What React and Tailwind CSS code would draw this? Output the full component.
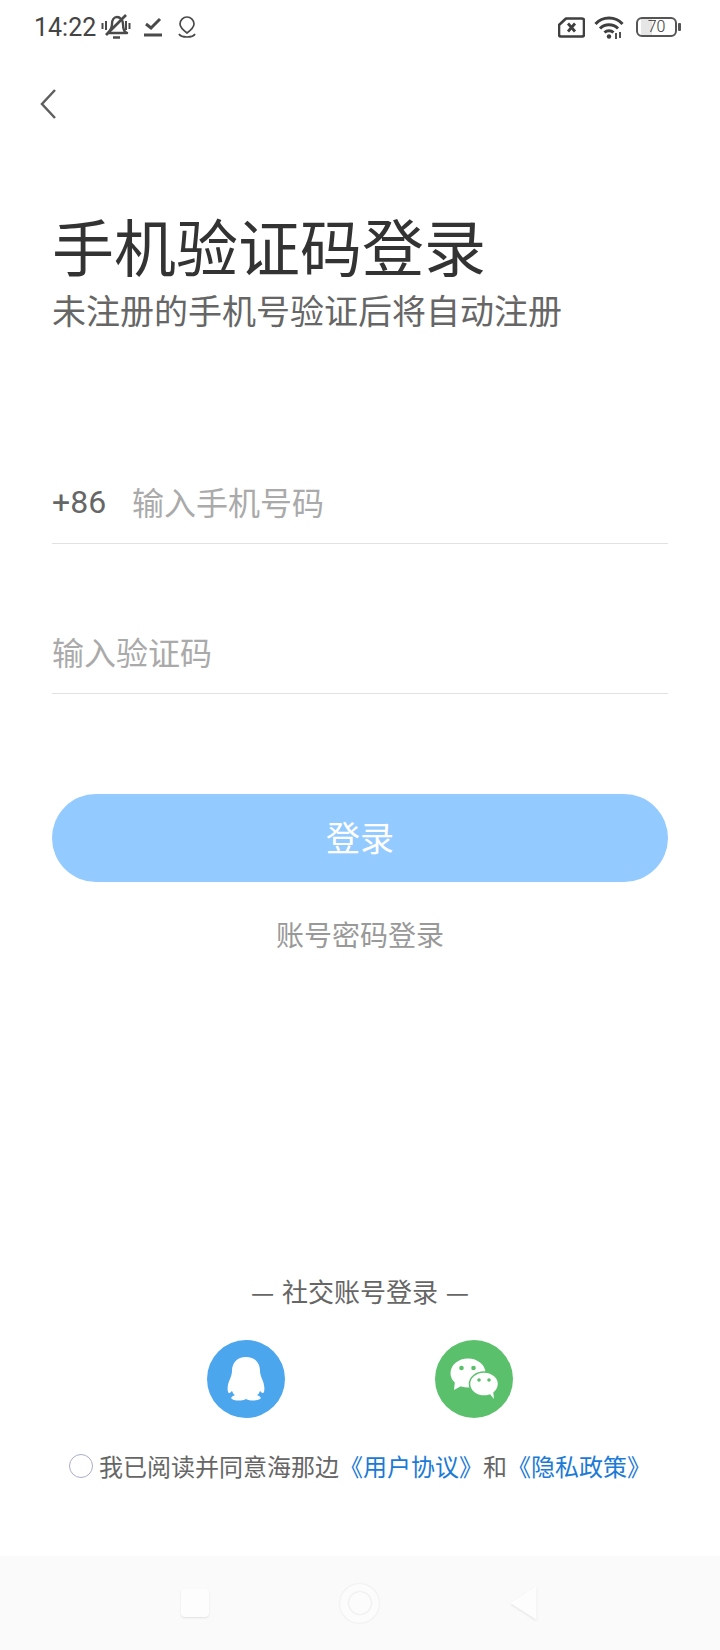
import React from 'react';

const cjk = { fontFamily: '"Noto Sans CJK SC", "Noto Sans", sans-serif' };

const StatusBar = () => (
  <div className="flex items-center justify-between h-[54px] pl-[34px] pr-[39px]">
    <div className="flex items-center">
      <span className="text-[25px] leading-none font-['Roboto'] text-[#444]">14:22</span>
      <svg width="30" height="26" viewBox="0 0 30 26" className="ml-[5px]" fill="none" stroke="#4a4a4a" strokeWidth="2.400">
        <path d="M7 19c2-2 4-5 4-9 0-4 2-7 5-7s6 3 6 7c0 4 1 8 4 9z" strokeLinejoin="round" />
        <path d="M12 23.500h7" strokeWidth="2.500" />
        <path d="M5 21 25 1" strokeWidth="2.600" />
        <path d="M1.500 9v6M5 7v9M25 7v9M28.500 9v6" strokeWidth="2" />
      </svg>
      <svg width="18" height="20" viewBox="0 0 18 20" className="ml-[13px]" fill="none" stroke="#4a4a4a">
        <path d="M2 7l5 4 9-9" strokeWidth="3" />
        <path d="M0 18h18" strokeWidth="3" />
      </svg>
      <svg width="18" height="23" viewBox="0 0 18 23" className="ml-[16px]" fill="none" stroke="#4a4a4a" strokeWidth="1.700">
        <path d="M9 17C5 14 2 11 2 8a7 7 0 0 1 14 0c0 3-3 6-7 9z" strokeLinejoin="round" />
        <path d="M1 18c2 4 14 4 16 0" />
      </svg>
    </div>
    <div className="flex items-center">
      <svg width="27" height="21" viewBox="0 0 27 21" fill="none" stroke="#3f3f3f">
        <path d="M8 1.500h16a2 2 0 0 1 2 2v14a2 2 0 0 1-2 2H3a2 2 0 0 1-2-2V8z" strokeWidth="2.600" strokeLinejoin="round" />
        <path d="M10 6.500l7 8M17 6.500l-7 8" strokeWidth="2.800" />
      </svg>
      <svg width="30" height="24" viewBox="0 0 30 24" className="ml-[9px]" fill="none" stroke="#3f3f3f" strokeWidth="3">
        <path d="M1.500 9c7-8 20-8 27 0" />
        <path d="M6 13.500c5-5 13-5 18 0" />
        <path d="M10.500 17.500c2.500-2.500 6.500-2.500 9 0" />
        <circle cx="15" cy="21.500" r="2.200" fill="#3f3f3f" stroke="none" />
        <path d="M22 18v6M26 17v6" strokeWidth="1.800" />
      </svg>
      <div className="ml-[12px] w-[41px] h-[20px] rounded-[6px] border-2 border-[#555] flex items-center justify-center text-[16px] leading-none font-['Roboto'] font-light text-[#333] bg-[linear-gradient(90deg,#fff_0%,#fff_8%,#e6e6e6_8%,#e6e6e6_38%,#fff_38%)]">
        70
      </div>
      <div className="ml-[1px] w-[3px] h-[8px] rounded-[1px] bg-[#555]" />
    </div>
  </div>
);

const Body = () => (
  <div className="h-[1502px] flex flex-col justify-between bg-white" style={cjk}>
    <div>
      <div className="pl-[40px] pt-[34px]">
        <svg width="18" height="32" viewBox="0 0 18 32" fill="none" stroke="#5f5f5f" strokeWidth="2.500" className="block">
          <path d="M15 2 2 16l13 14" />
        </svg>
      </div>
      <div className="px-[52px]">
        <h1 className="mt-[88px] text-[62px] leading-[74px] text-[#333] font-normal">手机验证码登录</h1>
        <p className="text-[34px] leading-[42px] text-[#666] mt-[7px]">未注册的手机号验证后将自动注册</p>
        <div className="mt-[127px] flex items-center h-[86px] border-b border-[#e2e2e2]">
          <span className="mt-[2px] text-[32px] font-['Roboto'] text-[#666] w-[80px]">+86</span>
          <span className="text-[32px] text-[#aaa]">输入手机号码</span>
        </div>
        <div className="mt-[64px] flex items-center h-[86px] border-b border-[#e2e2e2]">
          <span className="text-[32px] text-[#aaa]">输入验证码</span>
        </div>
        <button className="mt-[100px] w-full h-[88px] pb-[3px] rounded-full bg-[#93caff] text-white text-[34px]">登录</button>
        <p className="mt-[32px] text-center text-[28px] leading-[40px] text-[#999]">账号密码登录</p>
      </div>
    </div>
    <div className="pb-[72px]">
      <p className="text-center text-[26px] leading-[36px] text-[#666] [word-spacing:2px]">— 社交账号登录 —</p>
      <div className="mt-[31px] flex justify-center gap-[150px]">
        <div className="w-[78px] h-[78px] rounded-full bg-[#4ba6ee] flex items-center justify-center">
          <svg width="40" height="44" viewBox="0 0 40 44" fill="white">
            <path d="M20 0C29 0 34 6 34 14c0 3 1 5 2 8 2 4 3 9 2 13-1 2-2 1-4-1-1 2-1 3-3 4 3 1 5 3 3 4-3 2-10 2-14 0-4 2-11 2-14 0-2-1 0-3 3-4-2-1-2-2-3-4-2 2-3 3-4 1-1-4 0-9 2-13 1-3 2-5 2-8C6 6 11 0 20 0z" />
          </svg>
        </div>
        <div className="w-[78px] h-[78px] rounded-full bg-[#5bc06c] flex items-center justify-center">
          <svg width="50" height="44" viewBox="0 0 50 44">
            <ellipse cx="19" cy="16" rx="17.500" ry="14.500" fill="white" />
            <path d="M6 24 5 33l9-5z" fill="white" />
            <circle cx="12.500" cy="11" r="2.300" fill="#5bc06c" />
            <circle cx="24.500" cy="11" r="2.300" fill="#5bc06c" />
            <ellipse cx="35" cy="27" rx="14.500" ry="12" fill="white" stroke="#5bc06c" strokeWidth="1.500" />
            <path d="M40 36l5 6-1-9z" fill="white" />
            <circle cx="30" cy="23" r="1.800" fill="#5bc06c" />
            <circle cx="40" cy="23" r="1.800" fill="#5bc06c" />
          </svg>
        </div>
      </div>
      <div className="mt-[30px] flex items-center justify-center text-[24px] leading-[36px] text-[#666]">
        <span className="w-[24px] h-[24px] rounded-full border-[1.5px] border-[#a9adc8] mr-[6px]" />
        <span>我已阅读并同意海那边</span>
        <span className="text-[#1b7ad6]">《用户协议》</span>
        <span>和</span>
        <span className="text-[#1b7ad6]">《隐私政策》</span>
      </div>
    </div>
  </div>
);

const BottomBar = () => (
  <div className="h-[94px] pr-[2px] bg-[#fafafa] flex items-center justify-center gap-[131px]">
    <div className="w-[28px] h-[28px] rounded-[4px] bg-[#fdfdfd] shadow-[0_1px_2px_rgba(0,0,0,0.1)]" />
    <div className="w-[39px] h-[39px] rounded-full bg-[#fcfcfc] shadow-[0_0_2px_rgba(0,0,0,0.12)] flex items-center justify-center">
      <div className="w-[22px] h-[22px] rounded-full bg-[#fcfcfc] shadow-[0_0_2px_rgba(0,0,0,0.18)]" />
    </div>
    <svg width="27" height="34" viewBox="0 0 27 34" className="drop-shadow-[0_1px_1px_rgba(0,0,0,0.1)]">
      <path d="M26 1v32L1 17z" fill="#fdfdfd" stroke="#fdfdfd" strokeLinejoin="round" />
    </svg>
  </div>
);

const App = () => (
  <div className="w-[720px] h-[1650px] bg-white overflow-hidden">
    <StatusBar />
    <Body />
    <BottomBar />
  </div>
);

export default App;
